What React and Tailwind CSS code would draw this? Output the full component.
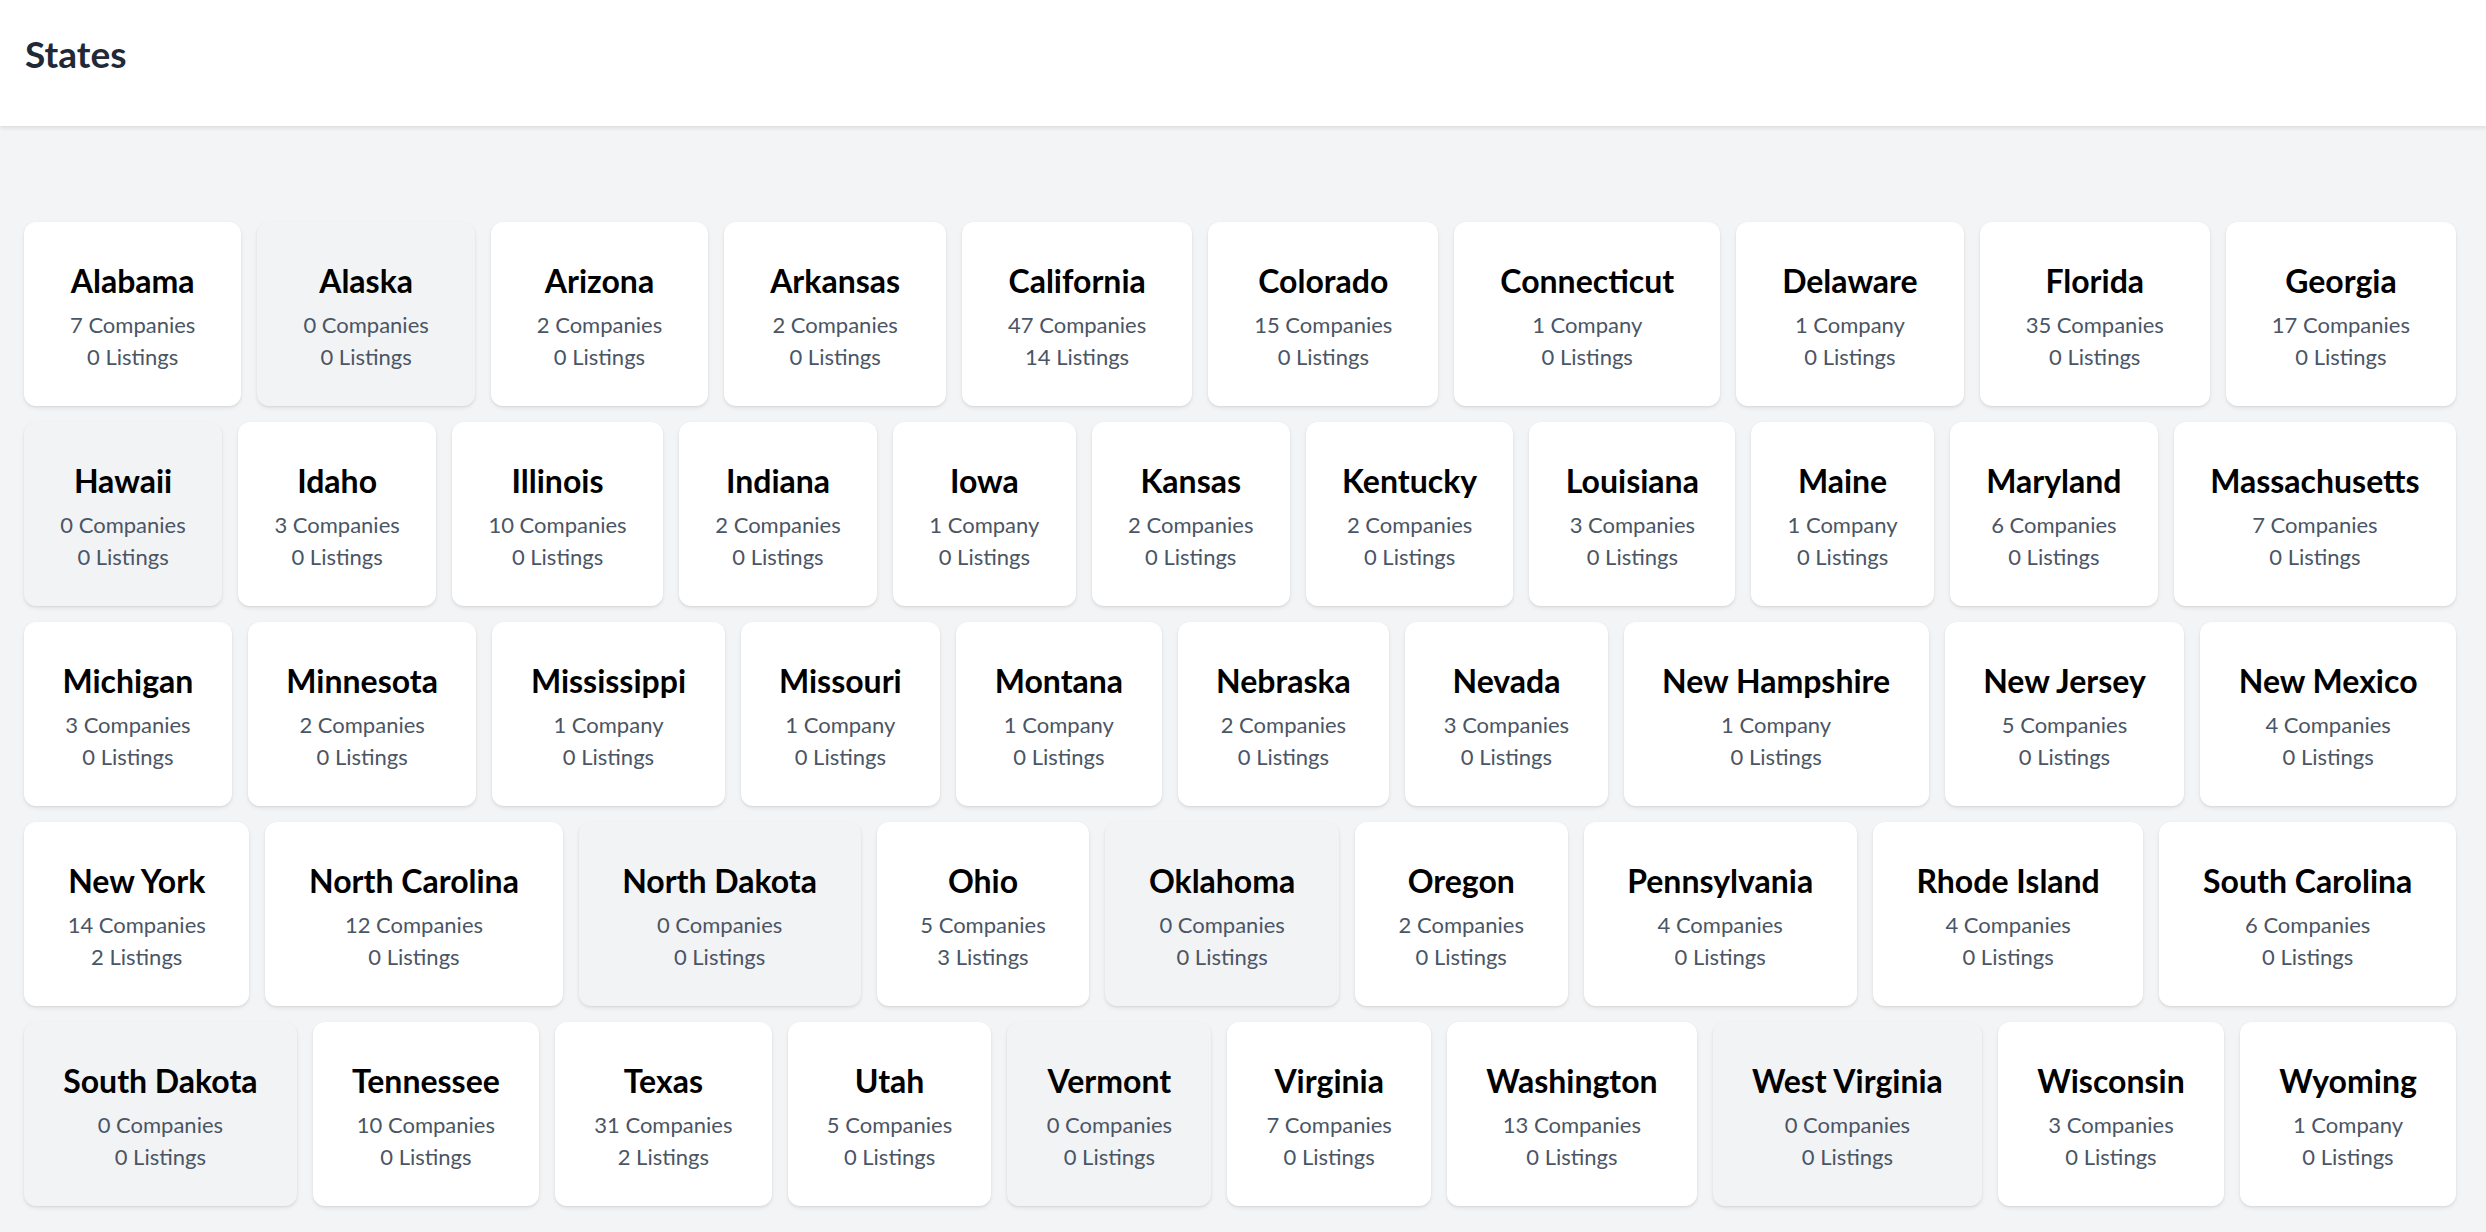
const rows = [
  [
    ['Alabama', 7, 0], ['Alaska', 0, 0], ['Arizona', 2, 0], ['Arkansas', 2, 0], ['California', 47, 14],
    ['Colorado', 15, 0], ['Connecticut', 1, 0], ['Delaware', 1, 0], ['Florida', 35, 0], ['Georgia', 17, 0],
  ],
  [
    ['Hawaii', 0, 0], ['Idaho', 3, 0], ['Illinois', 10, 0], ['Indiana', 2, 0], ['Iowa', 1, 0], ['Kansas', 2, 0],
    ['Kentucky', 2, 0], ['Louisiana', 3, 0], ['Maine', 1, 0], ['Maryland', 6, 0], ['Massachusetts', 7, 0],
  ],
  [
    ['Michigan', 3, 0], ['Minnesota', 2, 0], ['Mississippi', 1, 0], ['Missouri', 1, 0], ['Montana', 1, 0],
    ['Nebraska', 2, 0], ['Nevada', 3, 0], ['New Hampshire', 1, 0], ['New Jersey', 5, 0], ['New Mexico', 4, 0],
  ],
  [
    ['New York', 14, 2], ['North Carolina', 12, 0], ['North Dakota', 0, 0], ['Ohio', 5, 3], ['Oklahoma', 0, 0],
    ['Oregon', 2, 0], ['Pennsylvania', 4, 0], ['Rhode Island', 4, 0], ['South Carolina', 6, 0],
  ],
  [
    ['South Dakota', 0, 0], ['Tennessee', 10, 0], ['Texas', 31, 2], ['Utah', 5, 0], ['Vermont', 0, 0],
    ['Virginia', 7, 0], ['Washington', 13, 0], ['West Virginia', 0, 0], ['Wisconsin', 3, 0], ['Wyoming', 1, 0],
  ],
]

function plural(n, one, many) {
  return `${n} ${n === 1 ? one : many}`
}

// States with no companies get the muted gray card
function StateCard({ name, companies, listings }) {
  const empty = companies === 0
  return (
    <div
      className={`flex-auto h-[184px] px-8 pt-[39px] rounded-[12px] text-center shadow-[0_2px_4px_0_rgba(0,0,0,0.08),0_1px_2px_0_rgba(0,0,0,0.06)] ${
        empty ? 'bg-[#f2f3f5]' : 'bg-white'
      }`}
    >
      <div className="text-[32px] leading-[40px] font-bold text-black whitespace-nowrap">{name}</div>
      <div className="mt-[8px] text-[22px] leading-[32px] text-[#4a5565] whitespace-nowrap">
        <div>{plural(companies, 'Company', 'Companies')}</div>
        <div>{plural(listings, 'Listing', 'Listings')}</div>
      </div>
    </div>
  )
}

export default function App() {
  return (
    <div className="min-h-[1232px] bg-[#f3f4f6] font-['Lato','Noto_Sans',sans-serif]">
      <header className="h-[126px] bg-white px-[25px] pt-[34px] shadow-[0_2px_4px_0_rgba(0,0,0,0.1)]">
        <h1 className="text-[37px] leading-[40px] font-bold text-[#1f2937]">States</h1>
      </header>

      <main className="pl-[24px] pr-[30px] pt-[96px] pb-[26px] flex flex-col gap-[16px]">
        {rows.map((row, i) => (
          <div key={i} className="flex gap-[16px]">
            {row.map(([name, companies, listings]) => (
              <StateCard key={name} name={name} companies={companies} listings={listings} />
            ))}
          </div>
        ))}
      </main>
    </div>
  )
}
